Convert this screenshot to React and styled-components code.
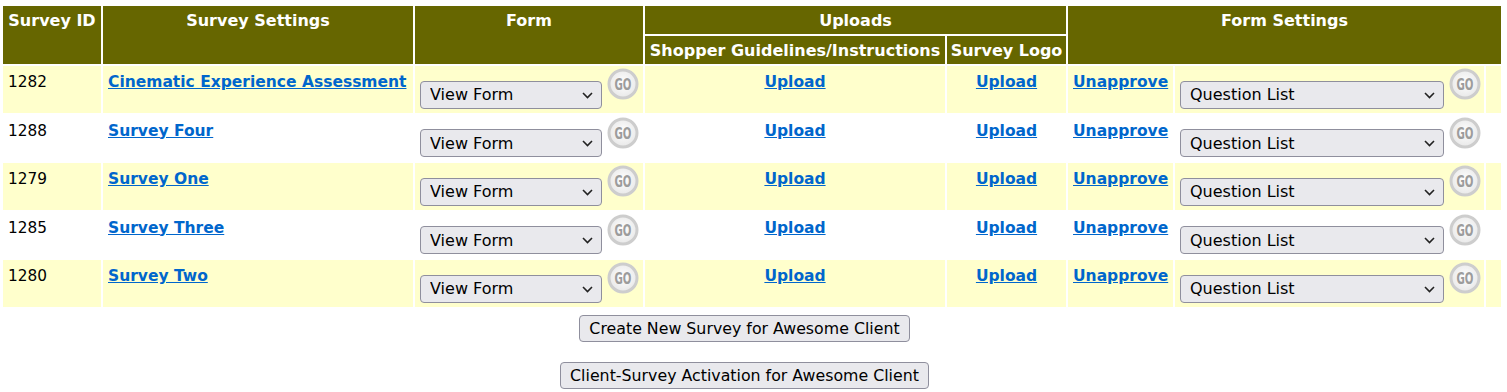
import styled, { createGlobalStyle } from "styled-components";

const GlobalStyle = createGlobalStyle`
  body {
    margin: 0;
    background: #fff;
    font-family: "DejaVu Sans", Verdana, sans-serif;
  }
`

const Page = styled.div`
  padding: 4px 0 0 1px;
`

const Table = styled.table`
  border-collapse: separate;
  border-spacing: 2px;
  table-layout: fixed;
  width: 1502px;
`

const HeadCell = styled.th`
  background-color: #666600;
  color: #fff;
  font-size: 16px;
  font-weight: bold;
  line-height: 19px;
  padding: 5px 2px 4px;
  vertical-align: top;
  text-align: center;
  white-space: nowrap;
  overflow: hidden;
`

const Cell = styled.td`
  background-color: ${(props) => (props.$alt ? "#ffffcc" : "#fff")};
  padding: ${(props) => (props.$control ? "2px 5px 4px" : "7px 5px 0")};
  text-align: ${(props) => (props.$center ? "center" : "left")};
  vertical-align: top;
  white-space: nowrap;
  font-size: 15.5px;
  line-height: 18px;
`

const IdText = styled.span`
  font-size: 15.3px;
  color: #000;
`

const Link = styled.a`
  color: #0066cc;
  font-weight: bold;
  font-size: 15.5px;
  text-decoration: underline;
  cursor: pointer;
`

const SelectWrap = styled.span`
  position: relative;
  display: inline-block;
`

const Select = styled.select`
  appearance: none;
  width: ${(props) => props.$w}px;
  height: 28px;
  box-sizing: border-box;
  background-color: #e9e9ed;
  border: 1px solid #8f8f9d;
  border-radius: 4px;
  color: #000;
  font-family: "DejaVu Sans", Verdana, sans-serif;
  font-size: 16px;
  padding: 0 28px 0 9px;
  margin: 0;
`

const Chevron = styled.svg`
  position: absolute;
  right: 9px;
  top: 11px;
  pointer-events: none;
`

const GoIcon = styled.svg`
  margin-left: 5px;
`

const Actions = styled.div`
  width: 1487px;
  display: flex;
  flex-direction: column;
  align-items: center;
  gap: 20px;
  padding-top: 6px;
`

const Button = styled.button`
  font-family: "DejaVu Sans", Verdana, sans-serif;
  font-size: 15.8px;
  color: #000;
  background-color: #e9e9ed;
  border: 1px solid #8f8f9d;
  border-radius: 4px;
  padding: 3px 9px;
  line-height: 19px;
  margin: 0;
`

function Go() {
  return (
    <GoIcon width="32" height="32" viewBox="0 0 32 32">
      <defs>
        <radialGradient id="goFill" cx="50%" cy="45%" r="55%">
          <stop offset="0%" stopColor="#ffffff" />
          <stop offset="100%" stopColor="#e8e8e8" />
        </radialGradient>
      </defs>
      <circle cx="16" cy="16" r="14" fill="url(#goFill)" stroke="#cdcdcd" strokeWidth="3" />
      <text
        x="16"
        y="22"
        textAnchor="middle"
        fontFamily="'DejaVu Sans Condensed', 'DejaVu Sans', sans-serif"
        fontWeight="bold"
        fontSize="16.5"
        fill="#9c9c9c"
        textLength="17"
        lengthAdjust="spacingAndGlyphs"
      >
        GO
      </text>
    </GoIcon>
  );
}

function Dropdown({ width, label }) {
  return (
    <SelectWrap>
      <Select $w={width} defaultValue={label}>
        <option>{label}</option>
      </Select>
      <Chevron width="11" height="7" viewBox="0 0 11 7">
        <path d="M1 1 L5.5 5.5 L10 1" fill="none" stroke="#222" strokeWidth="1.6" />
      </Chevron>
    </SelectWrap>
  );
}

const surveys = [
  { id: 1282, name: "Cinematic Experience Assessment" },
  { id: 1288, name: "Survey Four" },
  { id: 1279, name: "Survey One" },
  { id: 1285, name: "Survey Three" },
  { id: 1280, name: "Survey Two" },
];

function App() {
  return (
    <Page>
      <GlobalStyle />
      <Table>
        <colgroup>
          <col style={{ width: 98 }} />
          <col style={{ width: 310 }} />
          <col style={{ width: 228 }} />
          <col style={{ width: 300 }} />
          <col style={{ width: 119 }} />
          <col style={{ width: 105 }} />
          <col style={{ width: 309 }} />
          <col style={{ width: 15 }} />
        </colgroup>
        <thead>
          <tr>
            <HeadCell rowSpan={2}>Survey ID</HeadCell>
            <HeadCell rowSpan={2}>Survey Settings</HeadCell>
            <HeadCell rowSpan={2}>Form</HeadCell>
            <HeadCell colSpan={2}>Uploads</HeadCell>
            <HeadCell colSpan={3} rowSpan={2}>Form Settings</HeadCell>
          </tr>
          <tr>
            <HeadCell>Shopper Guidelines/Instructions</HeadCell>
            <HeadCell>Survey Logo</HeadCell>
          </tr>
        </thead>
        <tbody>
          {surveys.map((s, i) => {
            const alt = i % 2 === 0;
            return (
              <tr key={s.id}>
                <Cell $alt={alt}>
                  <IdText>{s.id}</IdText>
                </Cell>
                <Cell $alt={alt}>
                  <Link>{s.name}</Link>
                </Cell>
                <Cell $alt={alt} $control>
                  <Dropdown width={182} label="View Form" />
                  <Go />
                </Cell>
                <Cell $alt={alt} $center>
                  <Link>Upload</Link>
                </Cell>
                <Cell $alt={alt} $center>
                  <Link>Upload</Link>
                </Cell>
                <Cell $alt={alt}>
                  <Link>Unapprove</Link>
                </Cell>
                <Cell $alt={alt} $control>
                  <Dropdown width={264} label="Question List" />
                  <Go />
                </Cell>
                <Cell $alt={alt} />
              </tr>
            );
          })}
        </tbody>
      </Table>
      <Actions>
        <Button>Create New Survey for Awesome Client</Button>
        <Button>Client-Survey Activation for Awesome Client</Button>
      </Actions>
    </Page>
  );
}

export default App;
